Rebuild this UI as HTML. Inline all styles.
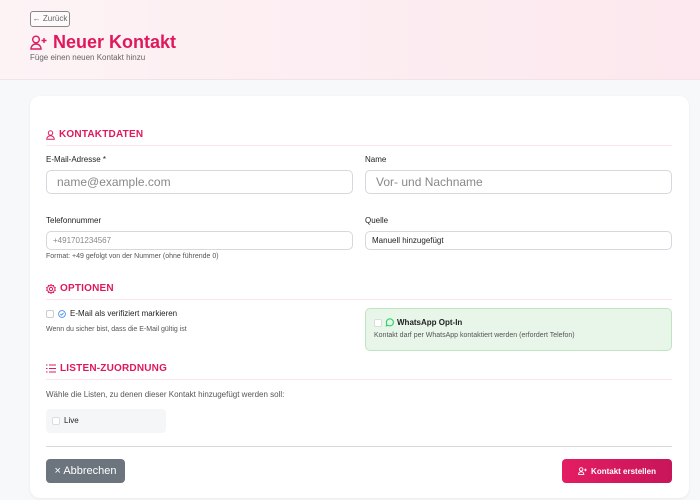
<!DOCTYPE html>
<html><head><meta charset="utf-8"><style>
*{box-sizing:border-box;margin:0;padding:0}
body{width:700px;height:500px;overflow:hidden;background:#f7f8fa;font-family:"Liberation Sans",sans-serif;color:#222;position:relative}
.hdr{position:absolute;left:0;top:0;width:700px;height:80px;background:linear-gradient(90deg,#fdf3f5,#fce8ee);border-bottom:1px solid #f3e3e7}
.abs{position:absolute}
.back{left:30px;top:11px;width:40px;height:16px;border:1px solid #888;border-radius:3px;font-size:8px;color:#666;line-height:14px;text-align:center;background:#fff8}
.title{left:30px;top:32px;font-size:18px;font-weight:bold;color:#e0185c;display:flex;align-items:center;gap:6px}
.sub{left:30px;top:53px;font-size:8px;color:#666}
.card{left:30px;top:96px;width:659px;height:402px;background:#fff;border-radius:10px;box-shadow:0 1px 3px rgba(0,0,0,.06)}
.sec{font-size:10px;font-weight:bold;color:#e0185c;display:flex;align-items:center;gap:4px;letter-spacing:.2px}
.line{height:1px;background:#fbe4ea}
.lbl{font-size:8px;color:#222}
.inp{border:1px solid #d5d8dc;border-radius:5px;background:#fff;padding-left:10px;color:#888}
.small{font-size:7px;color:#555}
.cb{width:8px;height:8px;border:1px solid #ccc;border-radius:2px;background:#fff;display:inline-block}
</style></head><body>
<div class="hdr"></div>
<div class="abs back">← Zurück</div>
<div class="abs title"><svg width="17" height="15" viewBox="0 0 17 15" fill="none" stroke="#e0185c" stroke-width="1.4"><circle cx="6" cy="4.5" r="3.3"/><path d="M1 14c0-3 2.3-5 5-5s5 2 5 5z"/><path d="M14 3v5M11.5 5.5h5"/></svg>Neuer Kontakt</div>
<div class="abs sub">Füge einen neuen Kontakt hinzu</div>
<div class="abs card"></div>

<div class="abs sec" style="left:46px;top:129px"><svg width="9" height="10" viewBox="0 0 9 10" fill="none" stroke="#e0185c" stroke-width="1"><circle cx="4.5" cy="3" r="2.2"/><path d="M.7 9.3c0-2 1.7-3.5 3.8-3.5s3.8 1.5 3.8 3.5z"/></svg>KONTAKTDATEN</div>
<div class="abs line" style="left:46px;top:145px;width:626px"></div>
<div class="abs lbl" style="left:46px;top:155px">E-Mail-Adresse *</div>
<div class="abs inp" style="left:46px;top:170px;width:307px;height:24px;font-size:12px;line-height:22px">name@example.com</div>
<div class="abs lbl" style="left:365px;top:155px">Name</div>
<div class="abs inp" style="left:365px;top:170px;width:307px;height:24px;font-size:12px;line-height:22px">Vor- und Nachname</div>
<div class="abs lbl" style="left:46px;top:216px">Telefonnummer</div>
<div class="abs inp" style="left:46px;top:231px;width:307px;height:19px;font-size:8px;line-height:17px;padding-left:6px">+491701234567</div>
<div class="abs small" style="left:46px;top:253px">Format: +49 gefolgt von der Nummer (ohne führende 0)</div>
<div class="abs lbl" style="left:365px;top:216px">Quelle</div>
<div class="abs inp" style="left:365px;top:231px;width:307px;height:19px;font-size:8px;line-height:17px;padding-left:6px;color:#222">Manuell hinzugefügt</div>

<div class="abs sec" style="left:46px;top:283px"><svg width="10" height="10" viewBox="0 0 10 10" fill="none" stroke="#e0185c" stroke-width="1"><circle cx="5" cy="5" r="1.6"/><path d="M5 .6l1 1.2 1.5-.3.4 1.5 1.4.6-.6 1.4.6 1.4-1.4.6-.4 1.5-1.5-.3L5 9.4l-1-1.2-1.5.3-.4-1.5-1.4-.6.6-1.4L.7 3.6l1.4-.6.4-1.5 1.5.3z"/></svg>OPTIONEN</div>
<div class="abs line" style="left:46px;top:299px;width:626px"></div>
<div class="abs" style="left:46px;top:309px;font-size:8px;display:flex;align-items:center;gap:4px"><span class="cb"></span><svg width="8" height="8" viewBox="0 0 8 8" fill="none" stroke="#4a8ef0" stroke-width=".9"><circle cx="4" cy="4" r="3.4"/><path d="M2.4 4l1.1 1.1 2.1-2.2"/></svg>E-Mail als verifiziert markieren</div>
<div class="abs small" style="left:46px;top:326px">Wenn du sicher bist, dass die E-Mail gültig ist</div>
<div class="abs" style="left:365px;top:308px;width:307px;height:43px;background:#e8f5e9;border:1px solid #bfe3c3;border-radius:5px"></div>
<div class="abs" style="left:374px;top:318px;font-size:8px;font-weight:bold;display:flex;align-items:center;gap:3px"><span class="cb" style="border-color:#ddd"></span><svg width="9" height="9" viewBox="0 0 9 9" fill="none" stroke="#25d366" stroke-width="1.1"><path d="M1.3 7.8l.5-1.8A3.5 3.5 0 1 1 3 7.3z"/></svg>WhatsApp Opt-In</div>
<div class="abs small" style="left:374px;top:332px">Kontakt darf per WhatsApp kontaktiert werden (erfordert Telefon)</div>

<div class="abs sec" style="left:46px;top:363px"><svg width="10" height="9" viewBox="0 0 10 9" fill="none" stroke="#e0185c" stroke-width="1"><path d="M0 1h1.5M0 4.5h1.5M0 8h1.5M3 1h7M3 4.5h7M3 8h7"/></svg>LISTEN-ZUORDNUNG</div>
<div class="abs line" style="left:46px;top:379px;width:626px"></div>
<div class="abs" style="left:46px;top:390px;font-size:8px;color:#555">Wähle die Listen, zu denen dieser Kontakt hinzugefügt werden soll:</div>
<div class="abs" style="left:46px;top:409px;width:120px;height:24px;background:#f5f6f8;border-radius:4px"></div>
<div class="abs" style="left:52px;top:416px;font-size:8px;display:flex;align-items:center;gap:4px"><span class="cb" style="border-color:#ddd"></span>Live</div>

<div class="abs" style="left:46px;top:446px;width:626px;height:1px;background:#d8d8d8"></div>
<div class="abs" style="left:46px;top:459px;width:79px;height:24px;background:#6c757d;border-radius:4px;color:#fff;font-size:11px;line-height:24px;text-align:center">× Abbrechen</div>
<div class="abs" style="left:562px;top:459px;width:110px;height:24px;background:linear-gradient(90deg,#e41d62,#c8155a);border-radius:4px;color:#fff;font-size:8px;font-weight:bold;display:flex;align-items:center;justify-content:center;gap:4px"><svg width="9" height="8" viewBox="0 0 17 15" fill="none" stroke="#fff" stroke-width="1.8"><circle cx="6" cy="4.5" r="3.3"/><path d="M1 14c0-3 2.3-5 5-5s5 2 5 5z"/><path d="M14 3v5M11.5 5.5h5"/></svg>Kontakt erstellen</div>
</body></html>
